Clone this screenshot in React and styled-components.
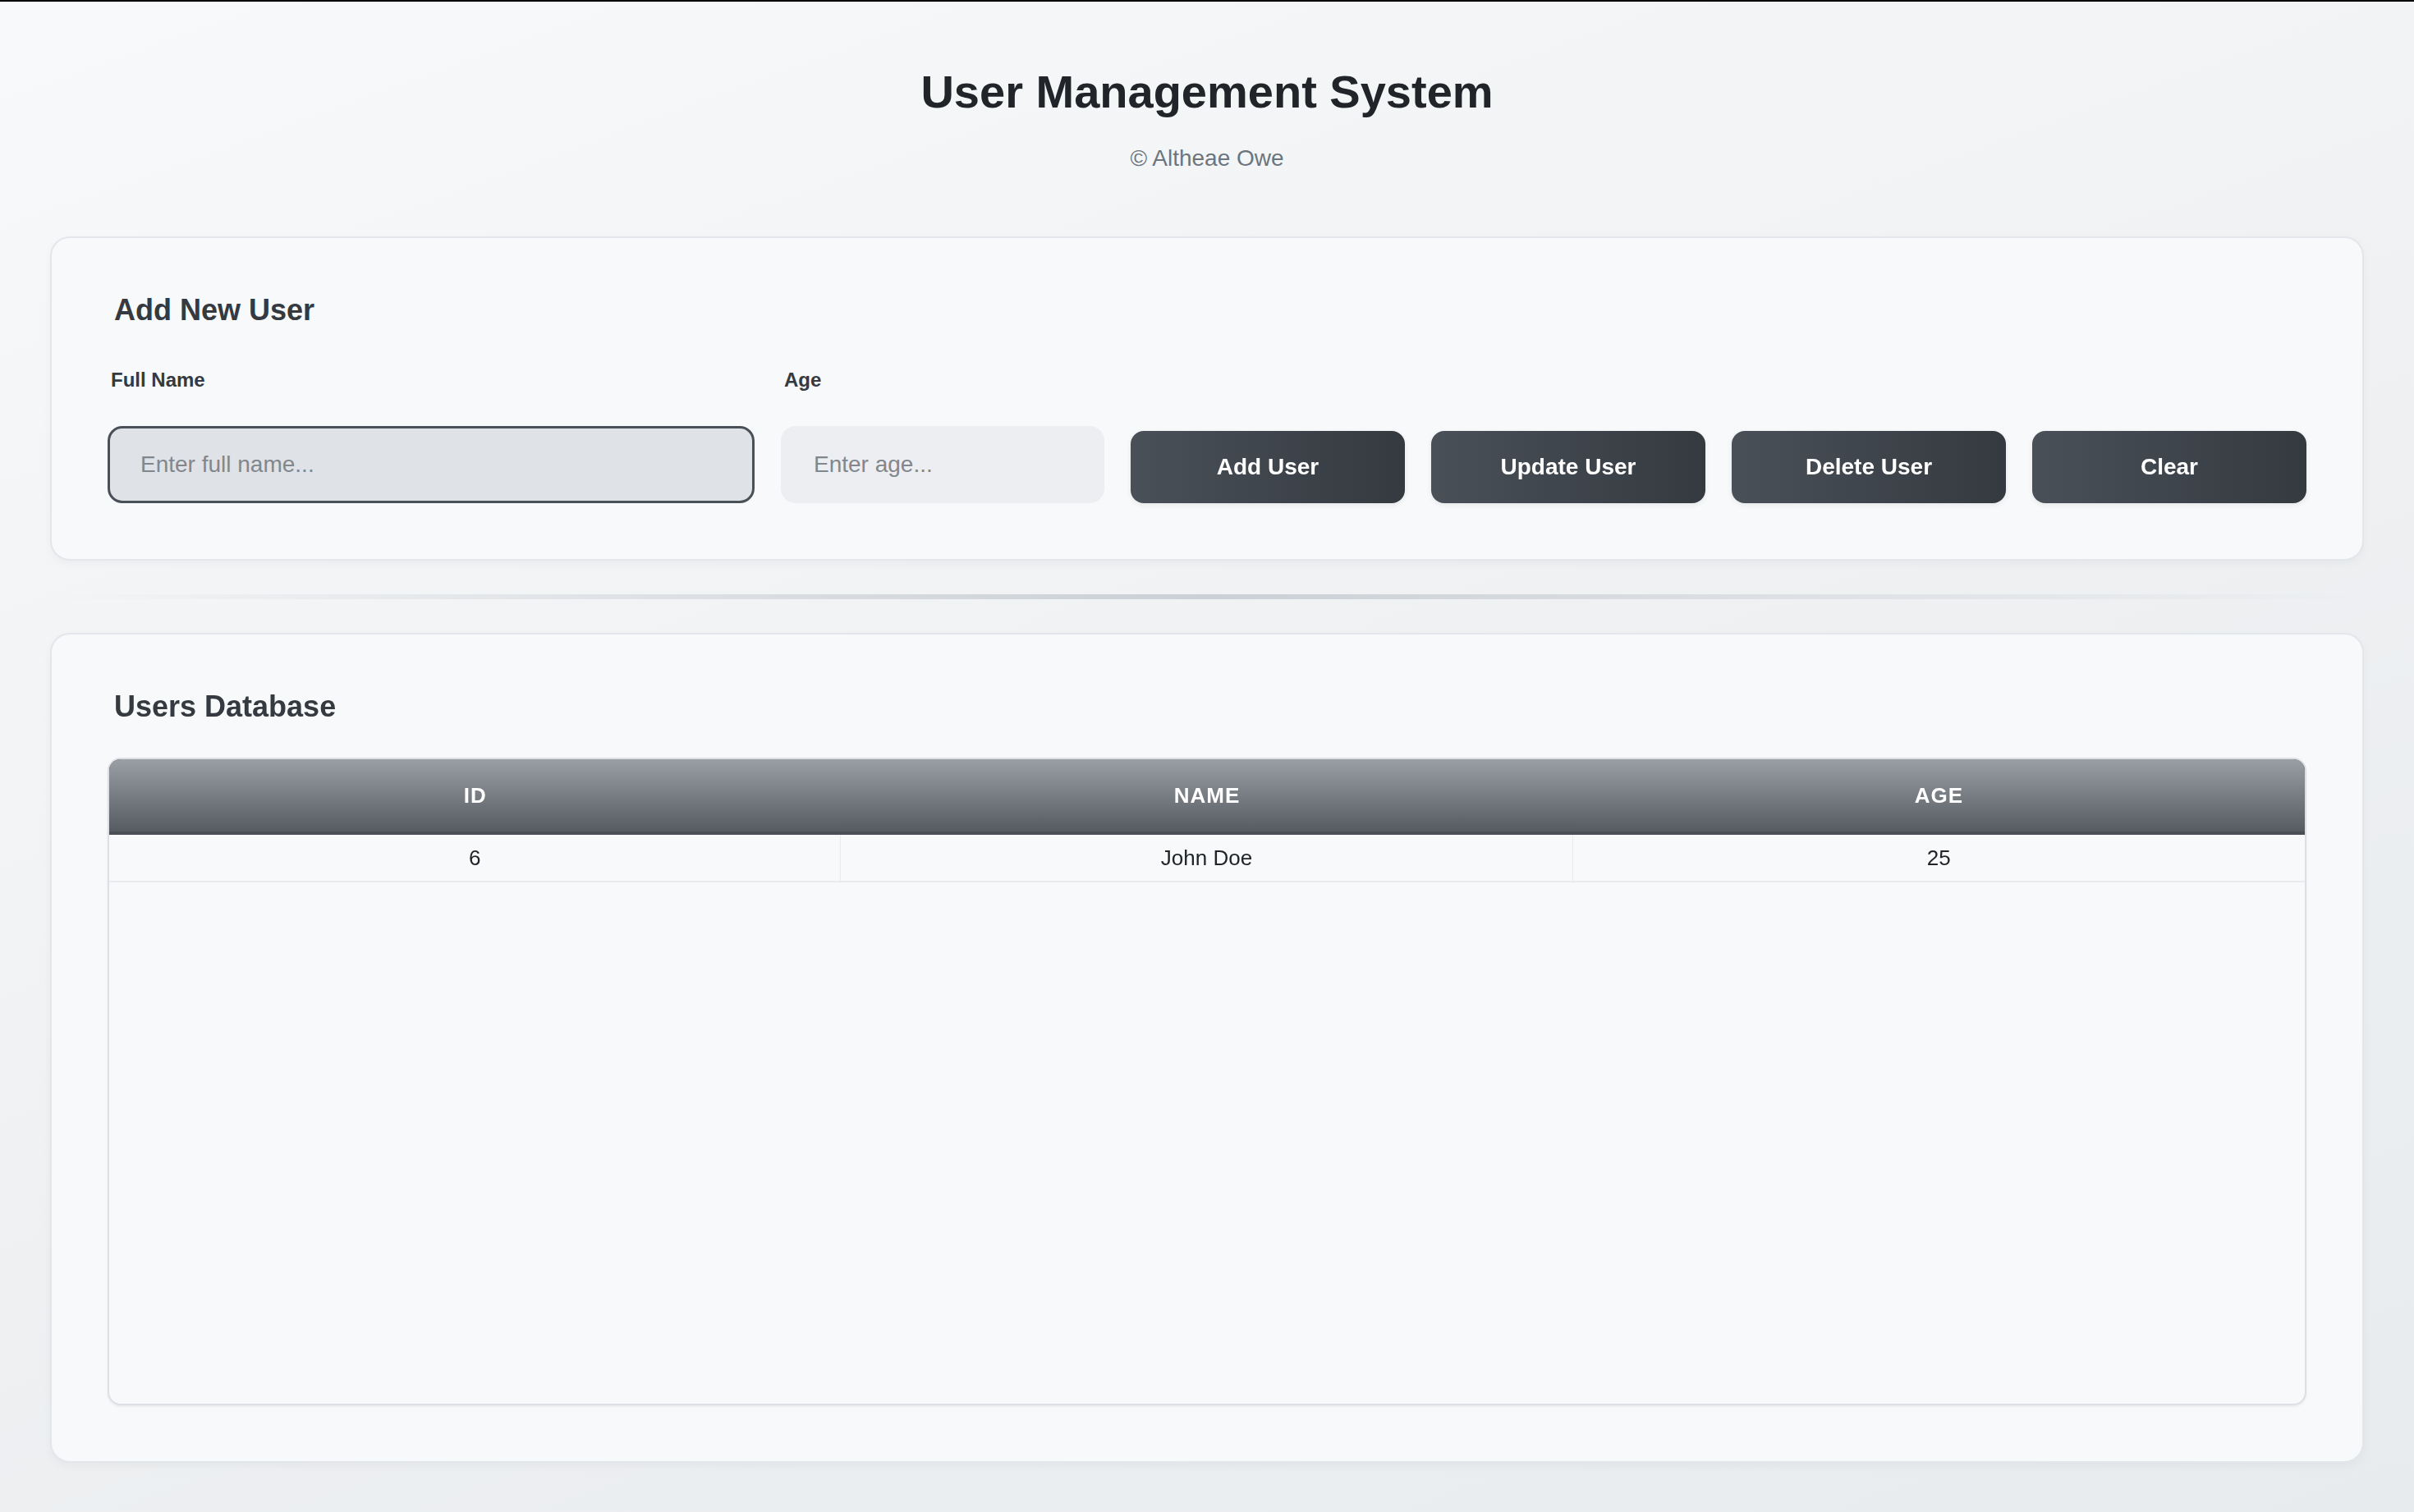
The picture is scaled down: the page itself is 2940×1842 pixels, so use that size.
import { useState } from 'react'
import styled, { createGlobalStyle } from 'styled-components'

const GlobalStyle = createGlobalStyle`
    * { box-sizing: border-box; }
    body {
        margin: 0;
        font-family: "Liberation Sans", Arial, sans-serif;
    }
`

const users = [{ id: 6, name: 'John Doe', age: 25 }]

export default function App(){
    const [name, setName] = useState('')
    const [age, setAge] = useState('')

    return(
        <Page>
            <GlobalStyle />
            <Header>
                <Title>User Management System</Title>
                <Subtitle>© Altheae Owe</Subtitle>
            </Header>

            <Card>
                <SectionTitle $gap={50}>Add New User</SectionTitle>
                <FormGrid>
                    <Field>
                        <Label htmlFor="fullname">Full Name</Label>
                        <Input
                            id="fullname"
                            $focused
                            autoFocus
                            placeholder="Enter full name..."
                            value={name}
                            onChange={e => setName(e.target.value)}
                        />
                    </Field>
                    <Field>
                        <Label htmlFor="age">Age</Label>
                        <Input
                            id="age"
                            placeholder="Enter age..."
                            value={age}
                            onChange={e => setAge(e.target.value)}
                        />
                    </Field>
                    <Button type="button">Add User</Button>
                    <Button type="button">Update User</Button>
                    <Button type="button">Delete User</Button>
                    <Button type="button" onClick={() => { setName(''); setAge('') }}>Clear</Button>
                </FormGrid>
            </Card>

            <Divider />

            <Card>
                <SectionTitle $gap={41}>Users Database</SectionTitle>
                <TableWrap>
                    <Table>
                        <thead>
                            <HeadRow>
                                <Th>ID</Th>
                                <Th>Name</Th>
                                <Th>Age</Th>
                            </HeadRow>
                        </thead>
                        <tbody>
                            {users.map(user =>
                                <tr key={'user-row' + user.id}>
                                    <Td>{user.id}</Td>
                                    <Td>{user.name}</Td>
                                    <Td>{user.age}</Td>
                                </tr>
                            )}
                        </tbody>
                    </Table>
                </TableWrap>
            </Card>
        </Page>
    )
}

const Page = styled.div`
    min-height: 100vh;
    border-top: 2px solid #000;
    padding: 78px 61px 61px;
    background: linear-gradient(160deg, #f8f9fa 0%, #eef0f2 55%, #e8ebee 100%);
`

const Header = styled.header`
    text-align: center;
    margin-bottom: 79px;
`

const Title = styled.h1`
    margin: 0;
    font-size: 56px;
    line-height: 64px;
    font-weight: 700;
    color: #212529;
`

const Subtitle = styled.p`
    margin: 33px 0 0;
    font-size: 28px;
    line-height: 32px;
    color: #6c757d;
`

const Card = styled.section`
    background: #f8f9fa;
    border: 2px solid #e3e6ea;
    border-radius: 24px;
    padding: 67px 68px 68px;
    box-shadow: 0 4px 12px rgba(0, 0, 0, 0.04);
`

const SectionTitle = styled.h2`
    margin: 0 0 ${p => p.$gap}px;
    padding-left: 8px;
    font-size: 36px;
    line-height: 42px;
    font-weight: 700;
    color: #343a40;
`

const FormGrid = styled.div`
    display: grid;
    grid-template-columns: 2fr 1fr repeat(4, 334px);
    gap: 32px;
    align-items: end;
`

const Field = styled.div`
    display: flex;
    flex-direction: column;
    gap: 42px;
`

const Label = styled.label`
    padding-left: 4px;
    font-size: 24px;
    line-height: 28px;
    font-weight: 700;
    color: #343a40;
`

const Input = styled.input`
    height: 94px;
    width: 100%;
    padding: 0 37px;
    border: 3px solid ${p => p.$focused ? '#495057' : '#eceef1'};
    border-radius: 18px;
    background: ${p => p.$focused ? '#dfe2e6' : '#eceef1'};
    font-family: inherit;
    font-size: 28px;
    color: #212529;
    outline: none;
    caret-color: #212529;
    &::placeholder {
        color: #82878d;
    }
`

const Button = styled.button`
    height: 88px;
    border: none;
    border-radius: 16px;
    background: linear-gradient(90deg, #4a5058 0%, #343a40 100%);
    color: #fff;
    font-family: inherit;
    font-size: 28px;
    font-weight: 700;
    cursor: pointer;
    box-shadow: 0 2px 6px rgba(0, 0, 0, 0.08);
`

const Divider = styled.div`
    height: 6px;
    margin: 41px 0;
    background: linear-gradient(90deg, transparent 0%, #cbd0d6 50%, transparent 100%);
`

const TableWrap = styled.div`
    height: 789px;
    border: 2px solid #dcdfe4;
    border-radius: 16px;
    background: #f8f9fa;
    box-shadow: 0 2px 3px rgba(0, 0, 0, 0.06);
`

const Table = styled.table`
    width: 100%;
    table-layout: fixed;
    border-collapse: separate;
    border-spacing: 0;
`

const HeadRow = styled.tr`
    background: #343a40;
`

const Th = styled.th`
    padding: 29px 0;
    background: linear-gradient(180deg, #9a9ea5 0%, #565b62 100%);
    border-bottom: 4px solid #4a4f57;
    color: #fff;
    font-size: 26px;
    line-height: 30px;
    font-weight: 700;
    letter-spacing: 1px;
    text-transform: uppercase;
    &:first-child { border-top-left-radius: 14px; }
    &:last-child { border-top-right-radius: 14px; }
`

const Td = styled.td`
    padding: 13px 0;
    text-align: center;
    font-size: 26px;
    line-height: 30px;
    color: #212529;
    border-bottom: 2px solid #e9ecef;
    &:not(:last-child) { border-right: 1px solid #e9ecef; }
`
